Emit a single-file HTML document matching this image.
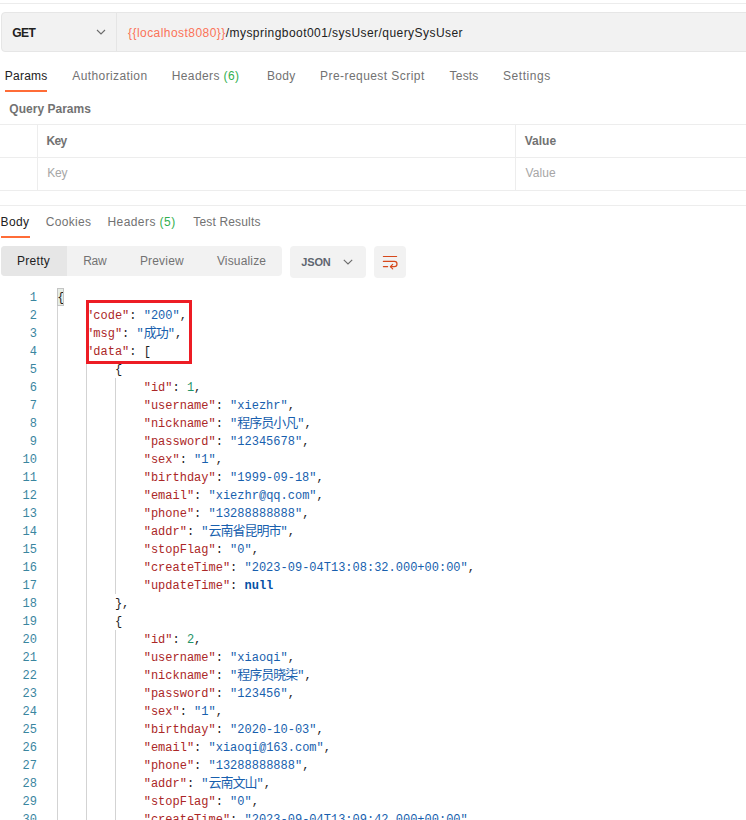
<!DOCTYPE html>
<html><head><meta charset="utf-8"><title>Postman</title>
<style>
html,body{margin:0;padding:0;background:#fff;}
body{width:746px;height:820px;overflow:hidden;position:relative;font-family:"Liberation Sans","Noto Sans CJK SC",sans-serif;font-size:12px;color:#727272;}
.abs{position:absolute;}
.t{position:absolute;white-space:nowrap;line-height:14px;}
.hl{position:absolute;height:1px;background:#ededed;left:0;width:746px;}
.vl{position:absolute;width:1px;background:#ededed;}
.ln{position:absolute;left:0;width:37px;text-align:right;font-family:"Liberation Mono","Noto Sans CJK SC",monospace;font-size:12px;line-height:18px;height:18px;color:#3a869f;}
.cl{position:absolute;white-space:pre;font-family:"Liberation Mono","Noto Sans CJK SC",monospace;font-size:12px;line-height:18px;height:18px;color:#000;}
.k{color:#ab2727}.s{color:#185fae}.n{color:#1f9468}.b{color:#0451a5;font-weight:bold}.p{color:#1e1e1e}
.cj{font-size:13px;letter-spacing:-1px;line-height:14px}
.g{position:absolute;width:1px;background:#d3d3d3;}
</style></head><body>
<div class="hl" style="top:3px;background:#ececec"></div>
<!-- url bar -->
<div class="abs" style="left:1px;top:12px;width:760px;height:38px;background:#f2f2f2;border:1px solid #e6e6e6;border-radius:4px;"></div>
<div class="vl" style="left:116px;top:13px;height:38px;background:#e5e5e5"></div>
<svg class="abs" style="left:96px;top:28px" width="10" height="8" viewBox="0 0 10 8"><path d="M1 2 L5 6 L9 2" fill="none" stroke="#6b6b6b" stroke-width="1.1"/></svg>
<!-- request tabs underline -->
<div class="abs" style="left:5px;top:89.5px;width:42px;height:2px;background:#ff6c37"></div>
<!-- table -->
<div class="hl" style="top:124px"></div>
<div class="hl" style="top:157px"></div>
<div class="hl" style="top:190px"></div>
<div class="vl" style="left:37px;top:124px;height:67px"></div>
<div class="vl" style="left:515px;top:124px;height:67px"></div>
<div class="hl" style="top:205px"></div>
<!-- response tabs underline -->
<div class="abs" style="left:1px;top:236px;width:29px;height:2px;background:#ff6c37"></div>
<!-- view buttons -->
<div class="abs" style="left:1px;top:246px;width:281px;height:30px;background:#f2f2f2;border-radius:4px;"></div>
<div class="abs" style="left:1px;top:246px;width:66px;height:30px;background:#e6e6e6;border-radius:4px 0 0 4px;"></div>
<div class="abs" style="left:290px;top:246px;width:76px;height:32px;background:#f2f2f2;border-radius:4px;"></div>
<svg class="abs" style="left:343px;top:258px" width="10" height="8" viewBox="0 0 10 8"><path d="M0.8 1.8 L5 6 L9.2 1.8" fill="none" stroke="#6b6b6b" stroke-width="1.1"/></svg>
<div class="abs" style="left:374px;top:246px;width:32px;height:32px;background:#f2f2f2;border-radius:4px;"></div>
<svg class="abs" style="left:374px;top:246px" width="32" height="32" viewBox="0 0 32 32"><g fill="none" stroke="#d6481c" stroke-width="1.2" stroke-linecap="round" stroke-linejoin="round"><path d="M9.4 10.5 H22.6"/><path d="M9.4 15.4 H20.4 a2.6 2.6 0 0 1 0 5.2 H16.6"/><path d="M18.7 18.3 L16.4 20.6 L18.7 22.9"/><path d="M9.4 20.6 H13.6"/></g></svg>
<div class="t" id="get" style="left:12.36px;top:26px;letter-spacing:-0.630px;font-weight:bold;color:#212121;">GET</div>
<div class="t" id="url" style="left:128.00px;top:26px;letter-spacing:0.448px;color:#212121;"><span style="color:#fb7358">{{localhost8080}}</span>/myspringboot001/sysUser/querySysUser</div>
<div class="t" id="params" style="left:4.82px;top:69px;letter-spacing:0.216px;color:#212121;">Params</div>
<div class="t" id="auth" style="left:72.36px;top:69px;letter-spacing:0.390px;">Authorization</div>
<div class="t" id="hdr6" style="left:171.72px;top:69px;letter-spacing:0.396px;">Headers <span style="color:#32b04f">(6)</span></div>
<div class="t" id="body" style="left:267.00px;top:69px;letter-spacing:0.300px;">Body</div>
<div class="t" id="pre" style="left:320.00px;top:69px;letter-spacing:0.445px;">Pre-request Script</div>
<div class="t" id="tests" style="left:449.62px;top:69px;letter-spacing:0.180px;">Tests</div>
<div class="t" id="settings" style="left:503.00px;top:69px;letter-spacing:0.566px;">Settings</div>
<div class="t" id="qp" style="left:9.36px;top:102px;letter-spacing:0.016px;font-weight:bold;">Query Params</div>
<div class="t" id="keyb" style="left:46.46px;top:134px;letter-spacing:-0.630px;font-weight:bold;">Key</div>
<div class="t" id="valb" style="left:524.72px;top:134px;letter-spacing:0.000px;font-weight:bold;">Value</div>
<div class="t" id="keyp" style="left:47.36px;top:166px;letter-spacing:-0.270px;color:#a6a6a6;">Key</div>
<div class="t" id="valp" style="left:525.62px;top:166px;letter-spacing:0.090px;color:#a6a6a6;">Value</div>
<div class="t" id="rbody" style="left:0.46px;top:215px;letter-spacing:0.420px;color:#212121;">Body</div>
<div class="t" id="cookies" style="left:45.82px;top:215px;letter-spacing:0.300px;">Cookies</div>
<div class="t" id="hdr5" style="left:107.46px;top:215px;letter-spacing:0.432px;">Headers <span style="color:#32b04f">(5)</span></div>
<div class="t" id="testres" style="left:193.26px;top:215px;letter-spacing:0.164px;">Test Results</div>
<div class="t" id="pretty" style="left:17.00px;top:254px;letter-spacing:0.288px;color:#212121;">Pretty</div>
<div class="t" id="raw" style="left:83.18px;top:254px;letter-spacing:-0.270px;">Raw</div>
<div class="t" id="preview" style="left:139.90px;top:254px;letter-spacing:0.180px;">Preview</div>
<div class="t" id="visualize" style="left:216.90px;top:254px;letter-spacing:0.158px;">Visualize</div>
<div class="t" id="json" style="left:301.18px;top:255px;letter-spacing:-0.120px;font-size:11px;font-weight:bold;color:#5f6670;">JSON</div>
<!-- code -->
<div class="g" style="left:57px;top:306px;height:520px"></div>
<div class="g" style="left:86px;top:360px;height:470px"></div>
<div class="g" style="left:115px;top:378px;height:216px"></div>
<div class="g" style="left:115px;top:630px;height:200px"></div>
<div class="abs" style="left:58px;top:289px;width:5px;height:16px;background:#e6ede6"></div>
<div class="ln" style="top:289px">1</div><div class="cl" style="top:289px;left:57.3px"><span class="p">{</span></div>
<div class="ln" style="top:307px">2</div><div class="cl" style="top:307px;left:86.1px"><span class="k">"code"</span><span class="p">: </span><span class="s">"200"</span><span class="p">,</span></div>
<div class="ln" style="top:325px">3</div><div class="cl" style="top:325px;left:86.1px"><span class="k">"msg"</span><span class="p">: </span><span class="s">"<span class="cj">成功</span>"</span><span class="p">,</span></div>
<div class="ln" style="top:343px">4</div><div class="cl" style="top:343px;left:86.1px"><span class="k">"data"</span><span class="p">: [</span></div>
<div class="ln" style="top:361px">5</div><div class="cl" style="top:361px;left:114.9px"><span class="p">{</span></div>
<div class="ln" style="top:379px">6</div><div class="cl" style="top:379px;left:143.7px"><span class="k">"id"</span><span class="p">: </span><span class="n">1</span><span class="p">,</span></div>
<div class="ln" style="top:397px">7</div><div class="cl" style="top:397px;left:143.7px"><span class="k">"username"</span><span class="p">: </span><span class="s">"xiezhr"</span><span class="p">,</span></div>
<div class="ln" style="top:415px">8</div><div class="cl" style="top:415px;left:143.7px"><span class="k">"nickname"</span><span class="p">: </span><span class="s">"<span class="cj">程序员小凡</span>"</span><span class="p">,</span></div>
<div class="ln" style="top:433px">9</div><div class="cl" style="top:433px;left:143.7px"><span class="k">"password"</span><span class="p">: </span><span class="s">"12345678"</span><span class="p">,</span></div>
<div class="ln" style="top:451px">10</div><div class="cl" style="top:451px;left:143.7px"><span class="k">"sex"</span><span class="p">: </span><span class="s">"1"</span><span class="p">,</span></div>
<div class="ln" style="top:469px">11</div><div class="cl" style="top:469px;left:143.7px"><span class="k">"birthday"</span><span class="p">: </span><span class="s">"1999-09-18"</span><span class="p">,</span></div>
<div class="ln" style="top:487px">12</div><div class="cl" style="top:487px;left:143.7px"><span class="k">"email"</span><span class="p">: </span><span class="s">"xiezhr@qq.com"</span><span class="p">,</span></div>
<div class="ln" style="top:505px">13</div><div class="cl" style="top:505px;left:143.7px"><span class="k">"phone"</span><span class="p">: </span><span class="s">"13288888888"</span><span class="p">,</span></div>
<div class="ln" style="top:523px">14</div><div class="cl" style="top:523px;left:143.7px"><span class="k">"addr"</span><span class="p">: </span><span class="s">"<span class="cj">云南省昆明市</span>"</span><span class="p">,</span></div>
<div class="ln" style="top:541px">15</div><div class="cl" style="top:541px;left:143.7px"><span class="k">"stopFlag"</span><span class="p">: </span><span class="s">"0"</span><span class="p">,</span></div>
<div class="ln" style="top:559px">16</div><div class="cl" style="top:559px;left:143.7px"><span class="k">"createTime"</span><span class="p">: </span><span class="s">"2023-09-04T13:08:32.000+00:00"</span><span class="p">,</span></div>
<div class="ln" style="top:577px">17</div><div class="cl" style="top:577px;left:143.7px"><span class="k">"updateTime"</span><span class="p">: </span><span class="b">null</span></div>
<div class="ln" style="top:595px">18</div><div class="cl" style="top:595px;left:114.9px"><span class="p">},</span></div>
<div class="ln" style="top:613px">19</div><div class="cl" style="top:613px;left:114.9px"><span class="p">{</span></div>
<div class="ln" style="top:631px">20</div><div class="cl" style="top:631px;left:143.7px"><span class="k">"id"</span><span class="p">: </span><span class="n">2</span><span class="p">,</span></div>
<div class="ln" style="top:649px">21</div><div class="cl" style="top:649px;left:143.7px"><span class="k">"username"</span><span class="p">: </span><span class="s">"xiaoqi"</span><span class="p">,</span></div>
<div class="ln" style="top:667px">22</div><div class="cl" style="top:667px;left:143.7px"><span class="k">"nickname"</span><span class="p">: </span><span class="s">"<span class="cj">程序员晓柒</span>"</span><span class="p">,</span></div>
<div class="ln" style="top:685px">23</div><div class="cl" style="top:685px;left:143.7px"><span class="k">"password"</span><span class="p">: </span><span class="s">"123456"</span><span class="p">,</span></div>
<div class="ln" style="top:703px">24</div><div class="cl" style="top:703px;left:143.7px"><span class="k">"sex"</span><span class="p">: </span><span class="s">"1"</span><span class="p">,</span></div>
<div class="ln" style="top:721px">25</div><div class="cl" style="top:721px;left:143.7px"><span class="k">"birthday"</span><span class="p">: </span><span class="s">"2020-10-03"</span><span class="p">,</span></div>
<div class="ln" style="top:739px">26</div><div class="cl" style="top:739px;left:143.7px"><span class="k">"email"</span><span class="p">: </span><span class="s">"xiaoqi@163.com"</span><span class="p">,</span></div>
<div class="ln" style="top:757px">27</div><div class="cl" style="top:757px;left:143.7px"><span class="k">"phone"</span><span class="p">: </span><span class="s">"13288888888"</span><span class="p">,</span></div>
<div class="ln" style="top:775px">28</div><div class="cl" style="top:775px;left:143.7px"><span class="k">"addr"</span><span class="p">: </span><span class="s">"<span class="cj">云南文山</span>"</span><span class="p">,</span></div>
<div class="ln" style="top:793px">29</div><div class="cl" style="top:793px;left:143.7px"><span class="k">"stopFlag"</span><span class="p">: </span><span class="s">"0"</span><span class="p">,</span></div>
<div class="ln" style="top:811px">30</div><div class="cl" style="top:811px;left:143.7px"><span class="k">"createTime"</span><span class="p">: </span><span class="s">"2023-09-04T13:09:42.000+00:00"</span><span class="p">,</span></div>
<div class="abs" style="left:57px;top:288px;width:5px;height:16px;border:1px solid #c4c4c4;"></div>
<div class="abs" style="left:86px;top:300px;width:100px;height:58px;border:3px solid #ed1c24;"></div>
</body></html>
